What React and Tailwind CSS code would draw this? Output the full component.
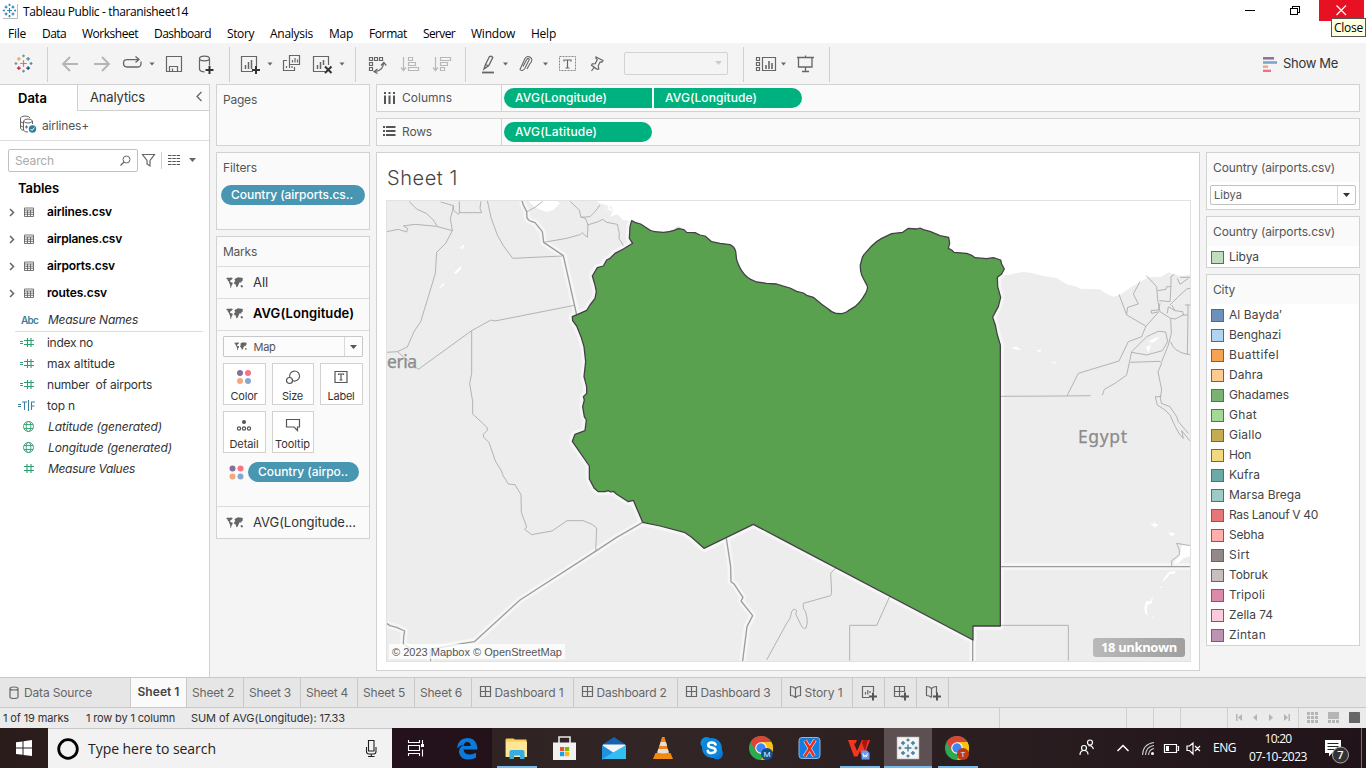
import React, { useLayoutEffect, useRef } from "react";

/* Text set to a given advance width by evening out its letter spacing. */
function T({ w, className = "", children }) {
  const ref = useRef(null);
  useLayoutEffect(() => {
    const el = ref.current;
    el.style.letterSpacing = "0px";
    const natural = el.getBoundingClientRect().width;
    if (w) el.style.letterSpacing = `${(w - natural) / el.textContent.length}px`;
  }, [w, children]);
  return (
    <span ref={ref} className={`inline-block shrink-0 whitespace-pre ${className}`}>
      {children}
    </span>
  );
}

const SEGOE = "font-['Open_Sans','Noto_Sans',sans-serif]";

/* Drawing cell: takes w × h in the flow, and is drawn in window coordinates. */
function Cell({ x, y = 44, w, h = 40, className = "", children }) {
  return (
    <svg
      className={`shrink-0 ${className}`}
      width={w}
      height={h}
      viewBox={`${x} ${y} ${w} ${h}`}
      fill="none"
      stroke="#666"
      strokeWidth="1"
    >
      {children}
    </svg>
  );
}

const Caret = ({ x, y = 62.5, fill = "#666" }) => (
  <path d={`M${x + 0.5} ${y}h5l-2.500 3z`} fill={fill} stroke="none" />
);
const Sep = ({ x }) => <path d={`M${x + 0.5} 47V82`} stroke="#d0d0d0" />;

const plusAt = (x, y, r) => `M${x - r} ${y}h${2 * r}M${x} ${y - r}v${2 * r}`;

function TableauMark({ cx, cy, s = 1, mono, sw = 1 }) {
  const c = mono ? Array(8).fill(mono) : ["#eba75b", "#5b9bab", "#7199a6", "#c72035", "#1f447e", "#59879b", "#eb912b", "#7b85a5"];
  const spots = [
    [0, -7, 1.3, 2], [0, 7, 1.3, 7], [-7, 0, 1.3, 1], [7, 0, 1.3, 5],
    [-4.300, -4.300, 1.800, 0], [4.300, -4.300, 1.800, 5], [-4.300, 4.300, 1.800, 3], [4.300, 4.300, 1.800, 4],
  ];
  return (
    <g transform={`translate(${cx} ${cy}) scale(${s})`} strokeWidth={sw}>
      <path d={plusAt(0, 0, 3)} stroke={mono || "#e8762d"} />
      {spots.map(([x, y, r, i]) => (
        <path key={`${x},${y}`} d={plusAt(x, y, r)} stroke={c[i]} />
      ))}
    </g>
  );
}

function TitleBar() {
  return (
    <div className={`flex h-[24px] items-start bg-white text-black ${SEGOE}`}>
      <Cell x={0} y={0} w={23} h={22}>
        <path d="M3 18.5H17.5V4" stroke="#bbb" />
        <TableauMark cx={9.5} cy={10.5} s={0.8} mono="#3686b0" sw={1.500} />
      </Cell>
      <T w={165} className="pt-[3px] text-[12px] leading-[17px]">Tableau Public - tharanisheet14</T>
      <div className="grow" />
      <Cell x={1230} y={0} w={89} h={22} className="ml-auto">
        <g stroke="#000" shapeRendering="crispEdges">
          <path d="M1245 10.500h10M1290.500 8.500h7v6h-7zM1292.500 8v-2h7v6h-2" />
        </g>
      </Cell>
      <div className="relative h-[21px] w-[47px] bg-white">
        <Cell x={1319} y={0} w={45} h={21} className="bg-[#e81123]">
          <path d="M1336.500 5.500l9.500 9.500M1346 5.500l-9.500 9.500" stroke="#fff" strokeWidth="1.200" />
        </Cell>
        <div className="absolute left-[12px] top-[18px] z-10 flex h-[19px] w-[35px] items-center border border-[#555] bg-[#ffffe1] pl-[2px]">
          <T w={29} className="text-[12px] leading-[16px]">Close</T>
        </div>
      </div>
    </div>
  );
}

const MENU = [
  ["File", 18, 34], ["Data", 24, 40], ["Worksheet", 56, 72], ["Dashboard", 57, 73], ["Story", 27, 43],
  ["Analysis", 43, 59], ["Map", 24, 40], ["Format", 38, 54], ["Server", 32, 48], ["Window", 44, 60], ["Help", 25, 41],
];

function MenuBar() {
  return (
    <div className={`flex h-[19px] items-center bg-white text-[12px] leading-[18px] text-black ${SEGOE}`}>
      {MENU.map(([t, w, slot]) => (
        <span key={t} className="flex justify-center" style={{ width: slot }}>
          <T w={w}>{t}</T>
        </span>
      ))}
    </div>
  );
}

function Toolbar() {
  return (
    <div className="flex h-[41px] items-end bg-[#f4f4f4]">
      <Cell x={0} w={48}>
        <TableauMark cx={23.5} cy={63.5} s={1.08} sw={1.150} />
        <Sep x={47} />
      </Cell>
      <Cell x={48} w={70}>
        <g stroke="#b4b4b4" strokeWidth="1.800">
          <path d="M78 64H63M70 57l-7 7 7 7M94 64h15M102 57l7 7-7 7" />
        </g>
      </Cell>
      <Cell x={118} w={43}>
        <path d="M133 67h-6q-3.500 0-3.500-3.700t3.500-3.700h12M135.500 56.500l3.500 3-3.500 3M133 67h4.500q3.500 0 3.500-3.500v-2" strokeWidth="1.300" />
        <Caret x={149} />
      </Cell>
      <Cell x={161} w={69}>
        <path d="M166.500 56.500h15v15h-15zM169.500 71.500v-5h8v5M172.500 68.500v3" strokeWidth="1.200" />
        <ellipse cx="204.500" cy="58.500" rx="5" ry="2.300" strokeWidth="1.200" />
        <path d="M199.500 58.500v11q1 2.300 5 2.300M209.500 58.500v7" strokeWidth="1.200" />
        <path d={plusAt(209.500, 70, 4)} stroke="#333" strokeWidth="2" />
        <Sep x={229} />
      </Cell>
      <Cell x={230} w={126}>
        <path d="M253 71.500h-11.500v-15h15V66" strokeWidth="1.200" />
        <path d="M245.500 65v4M248.500 62v7M251.500 60v9" strokeWidth="1.500" />
        <path d={plusAt(256, 70, 4)} stroke="#333" strokeWidth="2" />
        <Caret x={267} />
        <path d="M289.500 55.500h10v9h-10zM287 60.500h-3.500v10h11v-3.500M286.500 66v2M289.500 65v3M292 66v2M292.500 60v2.500M295 58v4.500M297.500 59.500v3" strokeWidth="1.200" />
        <path d="M325 71.500h-11.500v-15h15V65" strokeWidth="1.200" />
        <path d="M317.500 65v4M320.500 62v7M323.500 60v5" strokeWidth="1.500" />
        <path d="M325 66.500l6.500 6.500M331.500 66.500l-6.500 6.500" stroke="#333" strokeWidth="2" />
        <Caret x={339} />
        <Sep x={355} />
      </Cell>
      <Cell x={356} w={110}>
        <path d="M369.500 57.500h3v3h-3zM374.500 57.500h3v3h-3zM379.500 57.500h3v3h-3zM369.500 62.500h3v3h-3zM369.500 67.500h3v3h-3zM383.500 63q0 7-8 8.500M381 65.500l2.800-3 2.500 3M377.500 69l-3.500 2.600 3.500 2" strokeWidth="1.200" />
        <g stroke="#b8b8b8" strokeWidth="1.200">
          <path d="M403.500 57v13M401 67.500l2.500 3 2.500-3M408.500 57.500h4v3h-4zM408.500 62.500h7v3h-7zM408.500 67.500h10v3h-10z" />
          <path d="M435.500 57v13M433 67.500l2.500 3 2.500-3M440.500 57.500h10v3h-10zM440.500 62.500h7v3h-7zM440.500 67.500h4v3h-4z" />
        </g>
        <Sep x={465} />
      </Cell>
      <Cell x={466} w={158}>
        <path d="M484 69l1.500-4.500 4-8q2.200-.8 3.300 1l-4 8zM485.500 64.500l3.300 1.500" strokeWidth="1.300" />
        <path d="M482 72.500h12" strokeWidth="1.800" />
        <Caret x={502.500} />
        <path d="M523 66.500l4-7.500q1.500-1.500 2.300.5l-4.500 9q-2.500 3.500-4.800 1l5-11q2.500-3.500 5.500-1t-.5 6l-3 5.500" strokeWidth="1.100" />
        <Caret x={542.500} />
        <path d="M559.500 56.500h16v14h-16z" stroke="#888" strokeDasharray="2 1" />
        <path d="M564 61.500v-1.500h7v1.500M567.500 60v8M565.500 68h4" strokeWidth="1.200" />
        <path d="M596 57l7 3.500-1 1.500-1.800-.2-2 4 .6 3.200-1.600.3-5.700-4 .8-1.500 3-.2 2-4-1.300-1.200zM594 67.500l-2.500 3.500" strokeWidth="1.200" />
      </Cell>
      <div className="mb-[9px] flex h-[23px] w-[104px] items-center justify-end rounded-[2px] border border-[#d2d2d2] pr-[5px]">
        <Cell x={0} y={0} w={7} h={5}>
          <path d="M0 0h7L3.500 4z" fill="#ccc" stroke="none" />
        </Cell>
      </div>
      <Cell x={728} w={102}>
        <Sep x={743} />
        <path d="M756.500 57.500h3v3h-3zM756.500 62.500h3v3h-3zM756.500 67.500h3v3h-3zM762.500 57.500h13v13h-13z" strokeWidth="1.200" />
        <path d="M766 65v4M769 61v8M772 63v6" strokeWidth="1.600" />
        <Caret x={780.500} />
        <path d="M797 57.500h17M805.500 55.500v2M798.500 58v9h13.500v-9M805.500 67v4M802 71.500h7" strokeWidth="1.300" />
        <Sep x={829} />
      </Cell>
      <div className="flex h-[40px] grow items-center justify-end pb-[2px] pr-[28px] text-[#333]">
        <Cell x={1263} y={54} w={20} h={17}>
          <g strokeWidth="2.500">
            <path d="M1263 57.300h11" stroke="#8d6f9c" />
            <path d="M1263 61.500h14" stroke="#7ba2c8" />
            <path d="M1263 65.700h5" stroke="#f4a582" />
            <path d="M1263 69.900h8" stroke="#f76f80" />
          </g>
        </Cell>
        <T w={55} className="text-[13px] leading-[18px]">Show Me</T>
      </div>
    </div>
  );
}

const Globe = () => (
  <g stroke="#3fa77c">
    <circle cx="28.500" cy="10.500" r="5" />
    <ellipse cx="28.500" cy="10.500" rx="2.300" ry="5" />
    <path d="M24 8.500h9M24 12.500h9" />
  </g>
);
const Hash = () => <path d="M27 6v9M31 6v9M24 8.500h10M24 12.500h10" stroke="#2f9d70" strokeWidth="1.100" />;
const EqHash = () => (
  <g stroke="#2f9d70" strokeWidth="1.100">
    <path d="M27.500 6v9M31 6v9M24 8.500h10M24 12.500h10M20 9.500h3M20 11.500h3" />
  </g>
);
const EqTF = () => (
  <g stroke="#3a7f9c" strokeWidth="1.100">
    <path d="M18 9.500h3M18 11.500h3M22 7h5M24.500 7v8M28.500 5v11M31.500 15v-8h3.500M31.500 11h3" />
  </g>
);

const FIELDS = [
  [EqHash, "index no", 46], [EqHash, "max altitude", 68], [EqHash, "number  of airports", 105], [EqTF, "top n", 28],
  [Globe, "Latitude (generated)", 114, true], [Globe, "Longitude (generated)", 124, true], [Hash, "Measure Values", 87, true],
];
const TABLES = [["airlines.csv", 65], ["airplanes.csv", 75], ["airports.csv", 68], ["routes.csv", 60]];

function DataPane() {
  return (
    <div className="flex w-[210px] shrink-0 flex-col border-r border-t border-[#d0d0d0] bg-white text-[12px] text-[#333]">
      <div className="flex h-[26px]">
        <div className="flex w-[77px] items-center pb-[1px] pl-[18px]">
          <T w={29} className="text-[13px] font-semibold leading-[18px] text-black">Data</T>
        </div>
        <div className="flex grow items-center border-b border-l border-[#d0d0d0] bg-[#fafafa] pb-[1px] pl-[12px]">
          <T w={55} className="text-[13px] leading-[18px]">Analytics</T>
          <Cell x={1} y={0} w={20} h={14} className="ml-auto">
            <path d="M13.500 2L9 6.500l4.500 4.500" strokeWidth="1.300" />
          </Cell>
        </div>
      </div>
      <div className="flex h-[30px] items-center border-b border-[#ddd]">
        <Cell x={0} y={111} w={42} h={29}>
          <path d="M30 118q-1-2-5-2t-4.500 2v10q.5 2 3 2.500M20.500 121q.5 2 3 2M20.500 125q.5 2 3 2M32.500 124v-3q-1-2-4.500-2t-4.500 2v9q1 2.500 4.500 2M23.500 121q1 2 4.500 2t4.500-2M25 127h3M26.500 125.500v3" />
          <circle cx="32.500" cy="129" r="3.700" fill="#337e9f" stroke="none" />
          <path d="M30.500 129l1.500 1.500 2.500-3" stroke="#fff" />
        </Cell>
        <T w={47} className="leading-[16px] text-[#555]">airlines+</T>
      </div>
      <div className="flex h-[39px] items-center pl-[8px]">
        <div className="flex h-[23px] w-[130px] items-center rounded-[2px] border border-[#c2c2c2] pl-[6px] pr-[5px]">
          <T w={39} className="leading-[16px] text-[#aaa]">Search</T>
          <Cell x={0} y={0} w={12} h={12} className="ml-auto">
            <circle cx="6.500" cy="4.500" r="3.500" /><path d="M4 7L.5 10.500" strokeWidth="1.300" />
          </Cell>
        </div>
        <Cell x={138} y={151} w={66} h={20}>
          <path d="M142.500 154.500h12l-4.500 6v5.500l-3-2v-3.500z" strokeWidth="1.200" />
          <path d="M161.500 152v17" stroke="#d0d0d0" />
          <path d="M168 155.500h12M168 158.500h12M168 161.500h12M168 164.500h12" stroke="#555" strokeDasharray="3.500 .8" />
          <path d="M189 158h7l-3.500 4z" fill="#666" stroke="none" />
        </Cell>
      </div>
      <div className="flex h-[18px] items-start pl-[18px]">
        <T w={41} className="text-[13px] font-semibold leading-[16px] text-black">Tables</T>
      </div>
      {TABLES.map(([t, w]) => (
        <div key={t} className="flex h-[27px] items-center">
          <Cell x={0} y={0} w={47} h={20}>
            <path d="M10 7l3.500 3.500L10 14" strokeWidth="1.500" />
            <path d="M24.500 6h9v8.500h-9zM24 8h10M24 10.200h10M24 12.300h10M27.500 8v6.500M30.500 8v6.500" strokeWidth=".9" />
          </Cell>
          <T w={w} className="font-semibold leading-[18px] text-black">{t}</T>
        </div>
      ))}
      <div className="flex h-[25px] items-center pt-[3px]">
        <span className="w-[48px] pl-[21px]">
          <T w={17} className="text-[10px] font-semibold leading-[14px] text-[#3a7f9c]">Abc</T>
        </span>
        <T w={90} className="italic leading-[16px]">Measure Names</T>
      </div>
      <div className="ml-[15px] mr-[6px] h-[1px] bg-[#dcdcdc]" />
      {FIELDS.map(([Icon, t, w, it]) => (
        <div key={t} className="flex h-[21px] items-center">
          <Cell x={0} y={0} w={it ? 48 : 47} h={21}><Icon /></Cell>
          <T w={w} className={it ? "italic leading-[16px]" : "leading-[16px]"}>{t}</T>
        </div>
      ))}
    </div>
  );
}

function World({ s = 1, className = "" }) {
  return (
    <svg className={`shrink-0 ${className}`} width={18 * s} height={12 * s} viewBox="0 0 18 12" fill="#666">
      <path d="M0 1.200l2-.7 1 .6 1.200-.5 2 .2.600.7-1.300 1.200-1.200.8-.4 1.100 1.200.6L6.900 5.800 6.300 7.600 5.400 9 5 11.300l-.6-.6-.3-3L3.300 6.200 3 4.900 1.900 3.800 1.600 2.400z" />
      <path d="M8.400 2.600L9.400 1.400l1.400-.3 1-.8 1.800.2 3.400.6-.4 1 .2 1.300-1.200.9-.5 1.700-1.100-1-.9 1.300-.7 1.700-1 1.900-1 .3-.6-2.400L8 6.400l.2-1.500L9.400 4.200z" />
      <path d="M14.600 8.500L15.900 7.900l1.200 1.400-.8 1.100-1.500-.4z" />
    </svg>
  );
}

function Dots({ className = "" }) {
  return (
    <svg className={`shrink-0 ${className}`} width="15" height="15" viewBox="0 0 15 15">
      <circle cx="3.500" cy="3.500" r="3" fill="#86709a" /><circle cx="11.500" cy="3.500" r="3" fill="#f87482" />
      <circle cx="3.500" cy="11.500" r="3" fill="#f3a77e" /><circle cx="11.500" cy="11.500" r="3" fill="#86a7d0" />
    </svg>
  );
}

const panel = "border border-[#d2d2d2] bg-[#fafafa]";

function MarkButton({ label, w, bw, children }) {
  return (
    <div className="flex h-[42px] flex-col items-center border border-[#d2d2d2] bg-white pr-[1px] pt-[4px]" style={{ width: bw }}>
      <svg width="18" height="18" viewBox="0 0 18 18" fill="none" stroke="#555" strokeWidth="1.200">{children}</svg>
      <T w={w} className="mt-[2px] text-[11px] leading-[16px] text-[#333]">{label}</T>
    </div>
  );
}

function Cards() {
  return (
    <div className="ml-[6px] flex w-[154px] shrink-0 flex-col gap-[6px] text-[12px] text-[#555]">
      <div className={`${panel} flex h-[62px] items-start pl-[6px] pt-[6px]`}><T w={34} className="leading-[17px]">Pages</T></div>
      <div className={`${panel} flex h-[78px] flex-col items-start`}>
        <T w={34} className="ml-[6px] mt-[6px] leading-[17px]">Filters</T>
        <div className="ml-[4px] mt-[9px] flex h-[20px] w-[144px] items-center rounded-full bg-[#4996b2] pl-[10px] text-white">
          <T w={122} className="font-medium leading-[16px]">Country (airports.cs..</T>
        </div>
      </div>
      <div className={`${panel} h-[303px]`}>
        <div className="flex h-[30px] items-center border-b border-[#dcdcdc] pl-[6px]"><T w={34}>Marks</T></div>
        <div className="flex h-[32px] items-center border-b border-[#dcdcdc] pl-[9px]">
          <World /><T w={15} className="ml-[9px] text-[13px] text-[#333]">All</T>
        </div>
        <div className="flex h-[32px] items-center border-b border-[#dcdcdc] pb-[1px] pl-[9px]">
          <World /><T w={101} className="ml-[9px] text-[13px] font-semibold text-black">AVG(Longitude)</T>
        </div>
        <div className="ml-[6px] mt-[5px] flex h-[21px] w-[140px] items-center rounded-[1px] border border-[#c8c8c8] bg-[#fcfcfc] pl-[10px]">
          <World s={0.75} /><T w={22} className="ml-[6px] text-[11px] leading-[16px]">Map</T>
          <span className="ml-auto flex h-full w-[18px] items-center justify-center border-l border-[#d8d8d8]">
            <svg width="7" height="4" viewBox="0 0 7 4"><path d="M0 0h7L3.500 4z" fill="#555" /></svg>
          </span>
        </div>
        <div className="ml-[6px] mt-[6px] flex flex-wrap gap-x-[6px] gap-y-[6px]">
          <MarkButton label="Color" w={27} bw={43}>
            <g stroke="none">
              <circle cx="5" cy="5" r="3" fill="#86709a" /><circle cx="13" cy="5" r="3" fill="#f87482" />
              <circle cx="5" cy="13" r="3" fill="#f3a77e" /><circle cx="13" cy="13" r="3" fill="#86a7d0" />
            </g>
          </MarkButton>
          <MarkButton label="Size" w={21} bw={42}>
            <path d="M5.800 9.500a5 5 0 1 1 3 3.200" /><circle cx="5.500" cy="12.500" r="3" />
          </MarkButton>
          <MarkButton label="Label" w={27} bw={43}>
            <path d="M3 3.500h12v11H3zM6.500 7v-1h5v1M9 6v6M7.500 12h3" />
          </MarkButton>
          <MarkButton label="Detail" w={29} bw={43}>
            <circle cx="9" cy="6" r="2" fill="#555" stroke="none" />
            <circle cx="4" cy="12.500" r="1.600" /><circle cx="9" cy="12.500" r="1.600" /><circle cx="14" cy="12.500" r="1.600" />
          </MarkButton>
          <MarkButton label="Tooltip" w={35} bw={42}>
            <path d="M2.500 3.500h13v7.500h-2v3.500l-3.500-3.500h-7.500z" />
          </MarkButton>
        </div>
        <div className="mt-[9px] flex h-[20px] items-center pl-[12px]">
          <Dots />
          <div className="ml-[4px] flex h-[20px] w-[111px] items-center rounded-full bg-[#4996b2] pl-[10px] text-white">
            <T w={90} className="font-medium leading-[16px]">Country (airpo..</T>
          </div>
        </div>
        <div className="mt-[24px] flex h-[32px] items-center border-t border-[#dcdcdc] pl-[9px]">
          <World /><T w={103} className="ml-[9px] text-[13px] text-[#333]">AVG(Longitude...</T>
        </div>
      </div>
    </div>
  );
}

function Shelf({ label, w, icon, children }) {
  return (
    <div className={`flex h-[28px] items-center ${panel}`}>
      <svg className="ml-[5px]" width="15" height="14" viewBox="0 0 15 14" stroke="#555" strokeWidth="2" fill="none">{icon}</svg>
      <T w={w} className="ml-[5px] text-[12px] leading-[18px] text-[#555]">{label}</T>
      <div className="ml-auto flex h-full w-[858px] items-center gap-[2px] border-l border-[#d2d2d2] pl-[2px]">{children}</div>
    </div>
  );
}
const pill = "flex h-[20px] w-[148px] items-center bg-[#00b180] pl-[11px] text-white text-[12px]";

const LIBYA =
  "M755 92L765 97 782 102 800 114Q812 124 824 125L850 127Q870 126 882 121L895 116 912 119 920 127 945 128 960 135 975 138 995 155 1020 160 1050 164Q1063 170 1067 184L1070 210Q1078 232 1085 242 1096 260 1112 268L1130 276 1160 280 1190 282 1205 287 1230 294 1250 304 1270 309 1280 316 1300 322 1325 343 1345 357Q1355 368 1370 370.500L1385 371Q1398 368 1405 362L1425 350Q1440 337 1447 326L1458 308Q1465 294 1461 286L1455 275 1445 255Q1440 240 1441 225L1445 210Q1447 198 1455 190L1475 168Q1488 154 1505 145L1535 131 1568 127 1585 115 1610 117 1620 114 1630 119 1650 124 1680 137 1706 142 1709 160 1705 175 1715 180 1722 187 1760 190 1775 196 1785 203 1820 206 1840 203 1862 210 1865 222 1873 237 1865 252 1852 262 1853 290 1862 322 1855 350 1845 368 1838 382 1846 405 1852 435 1861 465V1308H1779V1350L1200 1045 1120 1003 972 1075 935 1042 913 1027 840 1008 788 997 760 931 745 935 710 913 700 904 692 906 685 902 675 905 655 905 643 895 628 867V828L577 754 585 733 615 722 619 690 613 680 608 650 613 630 610 620 620 610 620 590 612 560 617 515 612 470 603 440 590 408 578 392 577 380 600 370 620 361 630 345 645 325 649 305 645 285 637 258 652 233 670 228 680 210 690 205 705 190 730 177 758 160 748 145 750 110z";

const NATIONAL = [
  "M426 32L430 45 440 65 441 84 448 92 465 98 487 125 491 157 550 197 590 375",
  "M788 997L710 1042 645 1085 420 1230 283 1355 245 1361 150 1378 152 1420",
  "M20 1300L30 1307 50 1312 74 1323 71 1340 70 1362 90 1375",
  "M1039 1045L1052 1130 1053 1175 1063 1183 1089 1222 1083 1233 1118 1277 1101 1310 1087 1420",
  "M1861 1130H2432",
  "M1778 1350V1420",
];
const PROVINCES = [
  "M20 125L55 118 80 126 83 115 70 108 105 103 170 109 217 122",
  "M87 34L110 57 140 71 160 90 172 109",
  "M182 36L220 47 218 62 211 85 217 122 197 160 170 187 166 250 145 320 122 395 103 423 82 471 52 485 20 487",
  "M238 34V68H305L300 55 303 34M220 47V60L235 73 240 65",
  "M322 32Q330 85 352 135L370 167 398 205 548 198",
  "M441 65L465 52 488 34M491 157L560 145 600 134 606 128 622 142 624 105 617 86 602 80 598 60 570 34",
  "M602 82L630 80 645 65 660 45M622 105L655 95 668 88 680 97 712 103 718 130 717 145 730 167",
  "M583 346L345 393 333 390 275 422 115 538 52 485",
  "M275 422V550L269 580 278 635V672L322 713 322 721 310 733 311 742 327 757 346 813 363 840 370 858 385 882 405 884 423 914 424 967 440 1011 434 1018 455 1034 516 1023 561 992H610L636 1003 650 1014 647 1085",
  "M1160 1410L1220 1300 1230 1285 1235 1265Q1242 1252 1250 1262L1247 1272 1262 1303Q1270 1320 1278 1314 1284 1300 1281 1285L1277 1265 1270 1255V1240L1352 1217 1355 1210 1352 1150 1367 1134",
  "M1529 1220L1490 1306H1409V1412",
  "M1861 1306H2065V1412",
  "M1863 619L2060 618 2132 617M2061 618L2095 550 2217 513 2245 455 2285 440 2297 410 2335 367",
  "M2167 616L2173 598 2205 580 2240 555 2255 485 2300 440 2335 424 2357 426 2363 455 2347 482 2300 495 2255 487",
  "M2251 517L2340 514 2345 520 2334 545 2345 600 2341 622",
  "M2217 313L2240 375 2297 408M2280 275L2260 312 2275 342 2243 352 2240 373",
  "M2299 257L2330 290 2333 330 2340 365 2372 385 2374 430 2365 465 2345 515",
  "M2333 302L2358 298 2360 290 2373 290 2370 335 2338 332M2338 365L2315 370 2313 362 2335 360 2340 340M2373 290V260L2383 253",
  "M2370 345L2395 320 2420 297 2432 295M2365 350L2385 362 2408 365 2410 375 2385 387 2372 385M2365 350L2362 370M2385 362L2375 345",
  "M2392 265L2400 283 2425 265M2432 262L2400 262M2415 345H2432M2424 345V375H2408M2424 375L2422 493H2432M2422 493Q2380 485 2372 455",
  "M2326 620L2332 645 2355 660 2370 675 2385 708 2398 732 2410 745 2405 722 2432 755M2341 622L2344 640 2370 650 2390 680 2395 695 2425 730M2326 620H2344",
  "M2375 1130V1112L2398 1095 2398 1080 2390 1060 2432 1067",
];
const LAKES = [
  "M445 34L470 55 500 66 520 60 540 40 530 32zM240 175L248 165 255 166 247 177zM222 248L242 228 245 235 228 252zM176 296L190 278 192 286zM470 55L455 45z",
  "M1893 472L1910 470 1925 480 1905 478zM1968 482L1985 478 1980 486zM2010 516L2025 515 2028 521zM2305 455L2325 443 2340 442 2320 458zM2298 470L2313 465 2305 490z",
  "M2310 1000L2320 1003 2323 992 2326 1001 2335 1003 2325 1013zM2366 1027L2385 1030 2380 1038 2370 1036zM2432 1067L2405 1065 2400 1095 2380 1120 2395 1120 2410 1105 2432 1098zM2387 1143L2368 1145 2355 1160 2347 1172 2351 1173 2364 1160 2367 1153 2385 1150zM2341 1190h6v4h-6z",
  "M2318 1217L2312 1233 2298 1234 2293 1255 2296 1270 2304 1279 2300 1260 2302 1245 2316 1240zM2316 1277l5 6-5-1z",
];

function MapView() {
  return (
    <div className="relative ml-[9px] h-[462px] w-[805px] border border-[#e2e2e2]">
      <svg className="block" width="803" height="460" viewBox="387 201 803 460" fill="none" strokeLinejoin="round">
        <rect x="386" y="200" width="806" height="463" fill="#ededed" />
        <g transform="translate(380 190) scale(.333333)">
          <path d={LIBYA} stroke="#f6f6f6" strokeWidth="22" />
          <path d="M645 20L655 38 675 45 695 50 700 65 718 78 728 90 755 92 1100 300 1500 420 1800 250 1873 254 1890 255 1905 250 1930 246 1950 248 1990 258 2030 264 2060 283 2090 290 2100 296 2160 298 2180 312 2200 320 2220 315 2255 290 2290 270 2305 262 2345 260 2365 247 2400 258 2440 253V20z" fill="#fff" />
          <path d="M668 48L688 62 680 42 700 65 712 72 690 80 700 60 718 78" fill="#fff" />
          <path d="M883 118Q896 100 908 118z" fill="#ddd" />
          {LAKES.map((d) => <path key={d} d={d} fill="#fff" />)}
          {NATIONAL.map((d) => <path key={d} d={d} stroke="#f6f6f6" strokeWidth="20" />)}
          {PROVINCES.map((d) => <path key={d} d={d} stroke="#a9a9a9" strokeWidth="2.600" />)}
          {NATIONAL.map((d) => <path key={d} d={d} stroke="#9d9d9d" strokeWidth="4" />)}
          <path d={LIBYA} fill="#59a14f" stroke="#453e48" strokeWidth="3.800" />
        </g>
        <g fontFamily="'Noto Sans', sans-serif" fill="#8b8b8b" stroke="#8b8b8b" strokeWidth=".25">
          <text x="1078" y="443" fontSize="17.500" textLength="49">Egypt</text>
          <text x="387" y="367.500" fontSize="17.500" textLength="30">eria</text>
        </g>
      </svg>
      <div className="absolute bottom-[2px] left-[2px] flex h-[15px] w-[176px] items-center bg-white/75 pl-[3px] font-['Liberation_Sans',sans-serif] text-[11px] text-[#555]">
        <T w={170} className="leading-[14px]">© 2023 Mapbox © OpenStreetMap</T>
      </div>
      <div className={`absolute bottom-[4px] right-[5px] flex h-[19px] w-[92px] items-center rounded-[3px] bg-linear-to-r from-[#b9b9b9] to-[#a0a0a0] pb-[2px] pl-[8px] text-white ${SEGOE}`}>
        <T w={76} className="text-[13px] font-bold leading-[16px]">18 unknown</T>
      </div>
    </div>
  );
}

const CITIES = [
  ["Al Bayda′", 53, "bg-[#6d92b9]"], ["Benghazi", 52, "bg-[#b2d5ef]"], ["Buattifel", 50, "bg-[#f6a354]"], ["Dahra", 34, "bg-[#ffca91]"],
  ["Ghadames", 60, "bg-[#7ab272]"], ["Ghat", 28, "bg-[#a2d996]"], ["Giallo", 33, "bg-[#c4ab54]"], ["Hon", 22, "bg-[#f4d880]"],
  ["Kufra", 31, "bg-[#6caaa8]"], ["Marsa Brega", 72, "bg-[#9ec9c5]"], ["Ras Lanouf V 40", 89, "bg-[#e77777]"], ["Sebha", 35, "bg-[#ffaeac]"],
  ["Sirt", 21, "bg-[#938a87]"], ["Tobruk", 39, "bg-[#c8bfbc]"], ["Tripoli", 36, "bg-[#dc8aaa]"], ["Zella 74", 44, "bg-[#fccbdb]"], ["Zintan", 37, "bg-[#bd92b2]"],
];

const LegendRow = ({ name, w, color }) => (
  <div className="flex h-[20px] items-center pl-[4px]">
    <span className={`mr-[5px] h-[13px] w-[13px] border border-[#666] ${color}`} />
    <T w={w} className="leading-[16px] text-[#444]">{name}</T>
  </div>
);

function Legends() {
  const head = "flex items-center bg-[#fafafa] pl-[6px] h-[29px]";
  return (
    <div className="ml-[6px] flex w-[154px] flex-col gap-[6px] text-[12px] text-[#555]">
      <div className="h-[58px] border border-[#d2d2d2] bg-white">
        <div className={head}><T w={122}>Country (airports.csv)</T></div>
        <div className="ml-[3px] mt-[3px] flex h-[20px] w-[146px] items-center rounded-[2px] border border-[#c2c2c2] pl-[3px]">
          <T w={28} className="text-[11px] leading-[16px]">Libya</T>
          <span className="ml-auto flex h-full w-[18px] items-center justify-center border-l border-[#d8d8d8]">
            <svg width="7" height="4" viewBox="0 0 7 4"><path d="M0 0h7L3.500 4z" fill="#333" /></svg>
          </span>
        </div>
      </div>
      <div className="h-[52px] border border-[#d2d2d2] bg-white">
        <div className={`${head} mb-[1px]`}><T w={122}>Country (airports.csv)</T></div>
        <LegendRow name="Libya" w={30} color="bg-[#c2dcbe]" />
      </div>
      <div className="h-[372px] border border-[#d2d2d2] bg-white">
        <div className={`${head} mb-[1px]`}><T w={22}>City</T></div>
        {CITIES.map(([n, w, c]) => <LegendRow key={n} name={n} w={w} color={c} />)}
      </div>
    </div>
  );
}

function Workspace() {
  return (
    <div className="ml-[6px] flex w-[984px] flex-col gap-[6px]">
      <Shelf label="Columns" w={50} icon={<path d="M3 4.500v8.500M7.500 4.500v8.500M12 4.500v8.500M3 1v2M7.500 1v2M12 1v2" />}>
        <div className={`${pill} rounded-l-full`}><T w={92} className="font-medium">AVG(Longitude)</T></div>
        <div className={`${pill} rounded-r-full`}><T w={92} className="font-medium">AVG(Longitude)</T></div>
      </Shelf>
      <Shelf label="Rows" w={30} icon={<path d="M4 2h9.500M4 6h9.500M4 10h9.500M1 2h2M1 6h2M1 10h2" />}>
        <div className={`${pill} rounded-full`}><T w={82} className="font-medium">AVG(Latitude)</T></div>
      </Shelf>
      <div className="flex">
        <div className="h-[519px] w-[824px] shrink-0 border border-[#d2d2d2] bg-white">
          <div className="flex h-[47px] items-center pl-[10px] pt-[3px]">
            <T w={71} className="text-[20px] font-light leading-[26px] text-[#444]">Sheet 1</T>
          </div>
          <MapView />
        </div>
        <Legends />
      </div>
    </div>
  );
}

const GridIcon = <path d="M1.500 1.500h10v10h-10zM6.500 1.500v10M1.500 6.500h10" />;
const BookIcon = <path d="M6.500 3.500q-2-2-5-2v9q3 0 5 2 2-2 5-2v-9q-3 0-5 2zM6.500 3.500v9" />;

const TabIcon = ({ w = 13, children }) => (
  <svg width={w} height="16" viewBox={`0 0 ${w} 16`} fill="none" stroke="#666" strokeWidth="1.200" className="mr-[3px] shrink-0">{children}</svg>
);

const TABS = [
  ["Sheet 2", 42, 57], ["Sheet 3", 42, 57], ["Sheet 4", 42, 57], ["Sheet 5", 42, 57], ["Sheet 6", 42, 57],
  ["Dashboard 1", 69, 102, GridIcon], ["Dashboard 2", 70, 104, GridIcon], ["Dashboard 3", 70, 104, GridIcon], ["Story 1", 38, 71, BookIcon],
];

function SheetTabs() {
  return (
    <div className="flex h-[31px] border-b border-t border-[#c9c9c9] bg-[#e6e6e6] text-[12px] text-[#666]">
      <div className="flex w-[131px] items-center border-r border-[#c9c9c9] pl-[8px]">
        <TabIcon>
          <path d="M2 3.500q0-1.500 4-1.500t4 1.500-4 1.500-4-1.500M2 3.500v8.500q0 1.500 4 1.500t4-1.500V3.500" />
        </TabIcon>
        <T w={68}>Data Source</T>
      </div>
      <div className="flex w-[56px] items-center justify-center border-r border-[#c9c9c9] bg-[#fafafa] pb-[2px]">
        <T w={42} className="font-semibold text-[#444]">Sheet 1</T>
      </div>
      {TABS.map(([t, w, slot, icon]) => (
        <div key={t} className="flex items-center border-r border-[#c9c9c9]" style={{ width: slot, paddingLeft: icon ? 6.5 : 5 }}>
          {icon && <TabIcon>{icon}</TabIcon>}
          <T w={w}>{t}</T>
        </div>
      ))}
      {[
        <path key="s" d="M8 12.500H1.500v-11h11V7M4.500 7v2.500M6.800 5v4.500M9 6v2" />,
        <path key="d" d="M8 11.500H1.500v-10h10V7M6.500 1.500v10M1.500 6.500h10" />,
        <path key="b" d="M6.500 3.500q-2-2-5-2v9q3 0 5 2M11.500 8V1.500q-3 0-5 2v9" />,
      ].map((icon) => (
        <div key={icon.key} className="flex w-[32px] items-center border-r border-[#c9c9c9] pl-[8px]">
          <TabIcon w={18}>{icon}<path d={plusAt(12, 11.500, 4)} stroke="#555" strokeWidth="2" /></TabIcon>
        </div>
      ))}
    </div>
  );
}

function StatusBar() {
  return (
    <div className="flex h-[20px] items-center bg-[#ebebeb] text-[11px] text-[#333]">
      <T w={66} className="ml-[3px]">1 of 19 marks</T>
      <T w={89} className="ml-[17px]">1 row by 1 column</T>
      <T w={154} className="ml-[16px]">SUM of AVG(Longitude): 17.33</T>
      <Cell x={990} y={708} w={376} h={20} className="ml-auto">
        <path d="M999.500 708v20M1126.500 708v20M1153.500 708v20M1180.500 708v20M1227.500 708v20M1298.500 708v20" stroke="#d0d0d0" />
        <g fill="#b5b5b5" stroke="none">
          <path d="M1236 714h1.500v7h-1.500zM1242 714v7l-4-3.500zM1257 714v7l-4-3.500zM1269 714v7l4-3.500zM1284 714v7l4-3.500zM1288.500 714h1.500v7h-1.500z" />
          {[1307, 1311, 1315].map((x) => [712, 716, 720].map((y) => <rect key={`${x}${y}`} x={x} y={y} width="3" height="3" />))}
          <rect x="1328" y="712" width="11" height="7" />
          <path d="M1328 720h3v3h-3zM1332 720h3v3h-3zM1336 720h3v3h-3z" />
          <rect x="1349" y="712" width="11" height="11" fill="#666" rx=".5" />
        </g>
      </Cell>
    </div>
  );
}

function Chrome({ badge, letter }) {
  return (
    <g stroke="none">
      <circle cx="24" cy="20" r="12" fill="#2da94f" />
      <path d="M13.600 14A12 12 0 0 1 34.400 14H24L18.800 23z" fill="#dc4437" />
      <path d="M34.400 14A12 12 0 0 1 24 32L29.200 23 24 14z" fill="#fbc116" />
      <circle cx="24" cy="20" r="5.800" fill="#fff" /><circle cx="24" cy="20" r="4.700" fill="#3f85f4" />
      <circle cx="30" cy="26" r="6" fill={badge} />
      <text x="30" y="29" fontSize="8" textAnchor="middle" fill="#dfe8ee" fontFamily="Roboto, sans-serif">{letter}</text>
    </g>
  );
}

const APPS = [
  ["edge", false, <path key="e" d="M14 20.500Q14.500 11 24 10q10 0 10.500 11.500H20.500q.5 5 6.500 5 3.500 0 6-1.700v5Q30 31.500 25 31.500 17 31 16 24.500 16 19 21 16.500q-4 .5-7 4zM20.500 18h7.300q-.3-4-3.500-4t-3.800 4z" fill="#0a7bdb" stroke="none" />],
  ["files", true, (
    <g key="f" stroke="none">
      <path d="M13.500 12q0-1.500 1-1.500h7l1.500 1h11.500V29H13.500z" fill="#f6cf57" /><path d="M14 13.500h21V29H14z" fill="#ffe596" />
      <path d="M17.500 31v-7q0-2 2-2h11q2 0 2 2v7H28v-3.500h-6V31z" fill="#36ace3" />
    </g>)],
  ["store", false, (
    <g key="s" stroke="none">
      <path d="M18 15V9h11v6" fill="none" stroke="#e8e8e8" strokeWidth="1.600" /><path d="M12 14.500h23v17.500H12z" fill="#f1f1f1" />
      <path d="M19 19h4.200v4.200H19z" fill="#e9502b" /><path d="M24 19h4.200v4.200H24z" fill="#7eb900" />
      <path d="M19 24h4.200v4.200H19z" fill="#14a2e8" /><path d="M24 24h4.200v4.200H24z" fill="#fdb813" />
    </g>)],
  ["mail", false, (
    <g key="m" stroke="none">
      <path d="M12 17l12-8 12 8v14H12z" fill="#1563ae" /><path d="M13 16.500h22v6l-11 5-11-5z" fill="#f5f5f5" />
      <path d="M12 17l12 8-12 7z" fill="#2292e0" /><path d="M36 17L12 31h24z" fill="#33bdf1" />
    </g>)],
  ["vlc", false, (
    <g key="v" stroke="none">
      <path d="M16.500 25h15l2.500 6H14z" fill="#f28a10" /><path d="M23 9h2.500l4.700 17q-6 3.500-12.500 0z" fill="#f38410" />
      <path d="M21.700 14h5.300l1.100 4h-7.600zM19.200 21h9.700l1 3.500q-5.500 2-11.600 0z" fill="#e0e0e0" />
    </g>)],
  ["skype", false, (
    <g key="k" stroke="none">
      <circle cx="18.500" cy="15" r="6" fill="#0a8ee0" /><circle cx="29" cy="25.500" r="6" fill="#0878d4" /><circle cx="24" cy="20" r="10" fill="#0a86dc" />
      <path d="M27.500 16.500q-1-2-3.700-2-3.600 0-3.600 2.500 0 2 3.600 2.600t3.700 2.800-3.700 2.600-4-2.200" fill="none" stroke="#fff" strokeWidth="2.600" strokeLinecap="round" />
    </g>)],
  ["chrome-m", false, <Chrome key="cm" badge="#12508c" letter="M" />],
  ["xtool", false, (
    <g key="x">
      <rect x="13" y="9.500" width="21" height="21" rx="3" fill="#147be0" stroke="#8fb6dc" />
      <path d="M19 12.500L28 28M29 12L18.500 28.500" stroke="#fff" strokeWidth="3.600" /><path d="M19 12.500L28 28M29 12L18.500 28.500" stroke="#e5301c" strokeWidth="2.600" />
    </g>)],
  ["wps", true, (
    <g key="w" stroke="none">
      <path d="M13 12h9l-1.500 3.500H19L22 23l5-11h8l-5.500 15h-3.500l-1-4-2.500 5.500H19z" fill="#f7351c" /><path d="M27 15l3 8 3-11h-5z" fill="#a91515" />
      <path d="M26.500 22.500h5.500l2.500 2.500v6.500h-8z" fill="#6b9af5" /><path d="M28 25.500l1 3.500 1.200-2 1.200 2 1-3.500" fill="none" stroke="#fff" />
    </g>)],
  ["tableau", true, (
    <g key="t">
      <rect x="13" y="9" width="22" height="22" fill="#f4f4f4" stroke="#aaa" strokeWidth=".6" /><TableauMark cx={24} cy={20} s={1.150} mono="#3f7f9f" sw={1.200} />
    </g>)],
  ["chrome-t", true, <Chrome key="ct" badge="#c03a13" letter="T" />],
];

function Taskbar() {
  return (
    <div className={`flex h-[40px] bg-linear-to-r from-[#2b1c1c] via-[#312525] to-[#20141a] text-white ${SEGOE}`}>
      <Cell x={0} y={728} w={48} h={40}>
        <path d="M16 742.300l6.500-.9v6.200H16zM23.500 741.300l8.500-1.200v7.500h-8.500zM16 748.600h6.500v6.200l-6.500-.9zM23.500 748.600h8.500v7.500l-8.500-1.200z" fill="#fff" stroke="none" />
      </Cell>
      <div className="flex w-[344px] items-center border-t border-[#c8c8c8] bg-[#f2f2f2] pl-[8px]">
        <Cell x={56} y={728} w={32} h={38}><circle cx="68" cy="747" r="9.300" stroke="#000" strokeWidth="2.800" /></Cell>
        <T w={128} className="text-[14px] leading-[20px] text-[#222]">Type here to search</T>
        <Cell x={360} y={728} w={24} h={38} className="ml-auto mr-[8px]">
          <path d="M368.500 738.500h5.500v10.500h-5.500zM366.500 745v4.500q0 2.500 2.500 2.500h4.500q2.500 0 2.500-2.500V745M371.300 752v3M368 754.500h6.500" stroke="#222" strokeWidth="1.100" />
        </Cell>
      </div>
      <Cell x={392} y={728} w={51} h={40} className="bg-[#23111b]">
        <path d="M408.500 740v2.500h11V740M408.500 745.500h11v5h-11zM408.500 756v-2.500h11v2.500M422.500 740v4M422.500 749.500v7" stroke="#fff" strokeWidth="1.100" />
        <rect x="421" y="744" width="3" height="3" fill="#fff" stroke="none" />
      </Cell>
      {APPS.map(([name, on, icon]) => (
        <div key={name} className={`relative flex shrink-0 justify-center ${name === "edge" ? "w-[49px] bg-[#24121b]" : name === "tableau" ? "w-[48px] bg-[#5d5052]" : name === "chrome-t" ? "ml-[1px] w-[49px]" : "w-[49px]"}`}>
          <svg width="49" height="40" viewBox="0 0 49 40" fill="none" className="shrink-0">{icon}</svg>
          {on && <span className={`absolute bottom-0 h-[2px] bg-[#76b9ed] ${name === "tableau" ? "w-full" : "w-[40px]"}`} />}
        </div>
      ))}
      <div className="ml-auto flex items-center">
        <Cell x={1070} y={728} w={142} h={40}>
          <g stroke="#fff" strokeWidth="1.200">
            <circle cx="1084" cy="748" r="2.500" /><path d="M1080 755q0-4.500 4-4.500t4 4" /><circle cx="1090" cy="742.500" r="2.500" /><path d="M1088.500 746q3-1.500 5 3" />
            <path d="M1117.500 751l5.500-5.500 5.500 5.500" strokeWidth="1.500" />
            <path d="M1142.500 755Q1143 744 1154 742.500M1145.500 755q.5-8.500 8.500-9.500M1148.500 755q.5-5.500 5.500-6.500" strokeWidth="1.100" stroke="#ccc" /><circle cx="1152.500" cy="753.500" r="1.500" fill="#fff" stroke="none" />
            <path d="M1164.500 744.500h12v8h-12zM1177.500 746.500h1v4h-1" /><path d="M1166 746h3v5h-3z" fill="#fff" stroke="none" />
            <path d="M1187 746v4.500h2.500l3.500 3.500v-11l-3.500 3zM1195 746l5 5M1200 746l-5 5" strokeWidth="1.200" />
          </g>
        </Cell>
        <span className="flex w-[36px] pb-[1px] pl-[1px]"><T w={23} className="text-[12px] leading-[18px]">ENG</T></span>
        <div className="flex w-[60px] flex-col items-center text-[12px] leading-[18px]">
          <T w={27}>10:20</T>
          <T w={58}>07-10-2023</T>
        </div>
        <Cell x={1308} y={728} w={58} h={40}>
          <path d="M1325 740h16v13h-9l-3 3.500V753h-4z" fill="#fff" stroke="none" />
          <path d="M1327.500 743.500h11M1327.500 746.500h11M1327.500 749.500h7" stroke="#222" />
          <circle cx="1340.500" cy="755" r="8" fill="#333" stroke="#aaa" />
          <text x="1340.500" y="759" fontSize="11" fontWeight="600" textAnchor="middle" fill="#fff" stroke="none">7</text>
          <path d="M1361.500 728v40" stroke="#7a7074" />
        </Cell>
      </div>
    </div>
  );
}

export default function App() {
  return (
    <div className="flex h-[768px] w-[1366px] flex-col overflow-hidden bg-[#f4f4f4] font-['Inter','Open_Sans',sans-serif]">
      <TitleBar />
      <MenuBar />
      <Toolbar />
      <div className="flex h-[593px]">
        <DataPane />
        <Cards />
        <Workspace />
      </div>
      <SheetTabs />
      <StatusBar />
      <Taskbar />
    </div>
  );
}
